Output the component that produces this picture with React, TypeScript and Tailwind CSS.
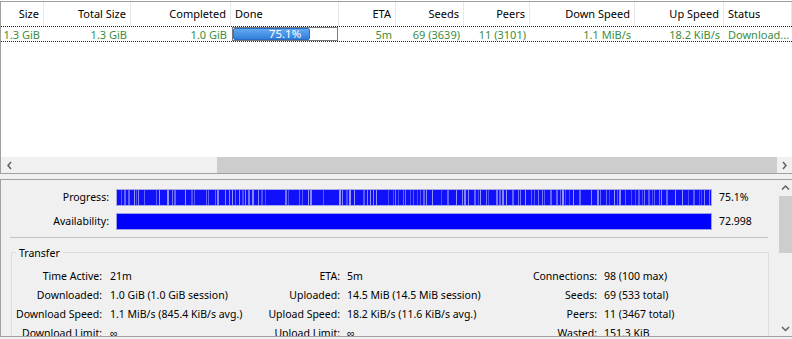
import React from "react";

type Col = { h: string; v?: string; w: string; left?: boolean; progress?: boolean };

const cols: Col[] = [
  { h: "Size", v: "1.3 GiB", w: "w-[43px]" },
  { h: "Total Size", v: "1.3 GiB", w: "w-[87px]" },
  { h: "Completed", v: "1.0 GiB", w: "w-[100px]" },
  { h: "Done", w: "w-[108px]", left: true, progress: true },
  { h: "ETA", v: "5m", w: "w-[57px]" },
  { h: "Seeds", v: "69 (3639)", w: "w-[68px]" },
  { h: "Peers", v: "11 (3101)", w: "w-[66px]" },
  { h: "Down Speed", v: "1.1 MiB/s", w: "w-[105px]" },
  { h: "Up Speed", v: "18.2 KiB/s", w: "w-[89px]" },
  { h: "Status", v: "Download...", w: "w-[68px]", left: true },
];

function stripes() {
  let s = 98765;
  const rnd = () => {
    s = (s * 1103515245 + 12345) % 2147483648;
    return s / 2147483648;
  };
  const palette = ["#4c4cff", "#6262ff", "#7474ff", "#5858ff", "#8585ff", "#9494ff"];
  const out: { x: number; w: number; c: string }[] = [];
  let x = 0;
  while (x < 594) {
    const r = rnd();
    if (r < 0.5) {
      const w = rnd() < 0.7 ? 1 : 2;
      out.push({ x, w, c: palette[Math.floor(rnd() * palette.length)] });
      x += w + 1 + Math.floor(rnd() * 2);
    } else {
      x += 1 + Math.floor(rnd() * 3);
    }
  }
  return out;
}

const STRIPES = stripes();

function Chevron({ dir }: { dir: "l" | "r" | "u" | "d" }) {
  const pts: Record<string, string> = {
    l: "5,1 2,4.5 5,8",
    r: "2,1 5,4.5 2,8",
    u: "1,5.5 4.5,2 8,5.5",
    d: "1,3 4.5,6.5 8,3",
  };
  const wh = dir === "l" || dir === "r" ? { w: 7, h: 9 } : { w: 9, h: 8 };
  return (
    <svg width={wh.w} height={wh.h} viewBox={`0 0 ${wh.w} ${wh.h}`}>
      <polyline points={pts[dir]} fill="none" stroke="#606060" strokeWidth="1.5" />
    </svg>
  );
}

const rows: [string, string, string, string, string, string][] = [
  ["Time Active:", "21m", "ETA:", "5m", "Connections:", "98 (100 max)"],
  ["Downloaded:", "1.0 GiB (1.0 GiB session)", "Uploaded:", "14.5 MiB (14.5 MiB session)", "Seeds:", "69 (533 total)"],
  ["Download Speed:", "1.1 MiB/s (845.4 KiB/s avg.)", "Upload Speed:", "18.2 KiB/s (11.6 KiB/s avg.)", "Peers:", "11 (3467 total)"],
  ["Download Limit:", "∞", "Upload Limit:", "∞", "Wasted:", "151.3 KiB"],
];

export default function App() {
  return (
    <div className="w-[792px] h-[339px] overflow-hidden bg-[#f0f0f0] font-['Noto_Sans',sans-serif] text-black">
      {/* Top list panel */}
      <div className="bg-white pt-[1px]">
        <div className="h-[173px] border-t border-l border-b border-[#a0a0a0] flex flex-col bg-white">
          {/* header */}
          <div className="h-[24px] flex text-[11px]">
            {cols.map((c) => (
              <div
                key={c.h}
                className={`${c.w} shrink-0 flex items-center whitespace-nowrap overflow-hidden border-r border-[#e8e8e8] ${
                  c.left ? "justify-start pl-[4px]" : "justify-end pr-[4px]"
                }`}
              >
                {c.h}
              </div>
            ))}
          </div>
          {/* row */}
          <div className="h-[16px] flex border-y border-dotted border-[#202020] text-[11px] text-[#3b8e3b]">
            {cols.map((c) =>
              c.progress ? (
                <div key={c.h} className={`${c.w} shrink-0 px-[1px]`}>
                  <div className="h-full border border-[#7a7a7a] bg-white relative">
                    <div className="absolute left-0 top-0 bottom-0 w-[77px] rounded-[2px] border border-[#2b6cc4] bg-gradient-to-b from-[#63a8f0] to-[#2f80dc]" />
                    <div className="absolute inset-0 flex items-center justify-center text-white text-[11.5px] leading-none">
                      75.1%
                    </div>
                  </div>
                </div>
              ) : (
                <div
                  key={c.h}
                  className={`${c.w} shrink-0 flex items-center whitespace-nowrap overflow-hidden leading-none ${
                    c.left ? "justify-start pl-[4px]" : "justify-end pr-[4px]"
                  }`}
                >
                  {c.v}
                </div>
              )
            )}
          </div>
          <div className="flex-1" />
          {/* horizontal scrollbar */}
          <div className="h-[16px] flex bg-[#f0f0f0]">
            <div className="w-[17px] flex items-center justify-center">
              <Chevron dir="l" />
            </div>
            <div className="flex-1 flex">
              <div className="w-[199px]" />
              <div className="flex-1 bg-[#cdcdcd]" />
            </div>
            <div className="w-[15px] flex items-center justify-center">
              <Chevron dir="r" />
            </div>
          </div>
        </div>
      </div>

      {/* Bottom detail panel */}
      <div className="mt-[5px] h-[158px] border-t border-l border-b border-[#a0a0a0] flex bg-[#f0f0f0] overflow-hidden">
        <div className="flex-1 min-w-0 text-[10.5px]">
          <div className="pt-[9px] flex items-center h-[26px]">
            <div className="w-[108px] text-right">Progress:</div>
            <div className="ml-[7px] w-[596px] h-[17px] border border-[#a8a8e6] bg-[#1010fa]">
              <svg width="594" height="15" className="block">
                {STRIPES.map((s, i) => (
                  <rect key={i} x={s.x} y={0} width={s.w} height={15} fill={s.c} />
                ))}
              </svg>
            </div>
            <div className="ml-[7px]">75.1%</div>
          </div>
          <div className="mt-[7px] flex items-center h-[17px]">
            <div className="w-[108px] text-right">Availability:</div>
            <div className="ml-[7px] w-[596px] h-[17px] border border-[#a0a0e6] bg-[#0000ff]" />
            <div className="ml-[7px]">72.998</div>
          </div>
          <div className="mt-[7px] ml-[9px] w-[758px] h-[1px] bg-[#c4c4c4]" />
          <div className="mt-[14px] ml-[10px] w-[758px] h-[120px] border border-[#dcdcdc] relative">
            <div className="absolute left-[4px] top-[-8px] px-[3px] bg-[#f0f0f0] leading-[16px]">Transfer</div>
            <div className="pt-[14px] grid grid-cols-[90px_138px_100px_157px_100px_1fr]">
              {rows.map((r) => (
                <React.Fragment key={r[0]}>
                  <div className="h-[19px] leading-[19px] text-right whitespace-nowrap">{r[0]}</div>
                  <div className="h-[19px] leading-[19px] pl-[8px] whitespace-nowrap">{r[1]}</div>
                  <div className="h-[19px] leading-[19px] text-right whitespace-nowrap">{r[2]}</div>
                  <div className="h-[19px] leading-[19px] pl-[7px] whitespace-nowrap">{r[3]}</div>
                  <div className="h-[19px] leading-[19px] text-right whitespace-nowrap">{r[4]}</div>
                  <div className="h-[19px] leading-[19px] pl-[7px] whitespace-nowrap">{r[5]}</div>
                </React.Fragment>
              ))}
            </div>
          </div>
        </div>
        {/* vertical scrollbar */}
        <div className="w-[14px] flex flex-col">
          <div className="h-[16px] flex items-center justify-center">
            <Chevron dir="u" />
          </div>
          <div className="ml-[1px] h-[57px] bg-[#cdcdcd]" />
          <div className="flex-1" />
          <div className="h-[17px] flex items-center justify-center">
            <Chevron dir="d" />
          </div>
        </div>
      </div>
    </div>
  );
}
